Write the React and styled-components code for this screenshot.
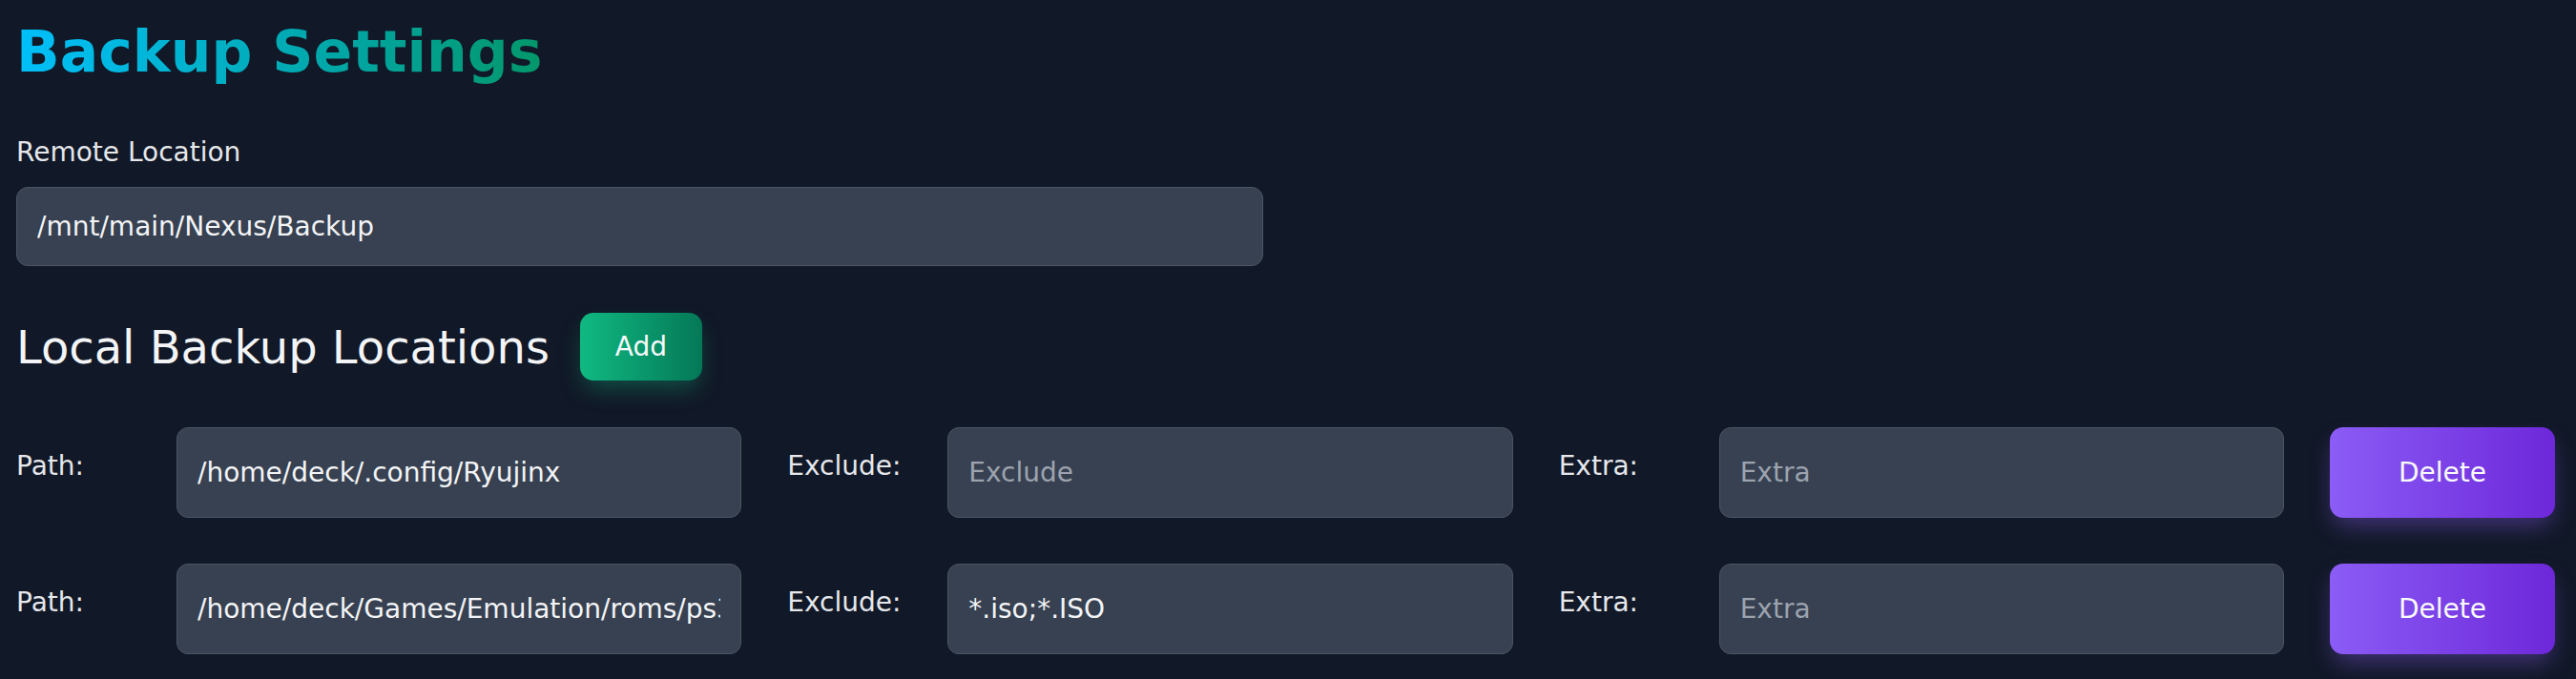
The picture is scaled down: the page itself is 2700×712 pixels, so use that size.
import React from 'react'
import styled, { createGlobalStyle } from 'styled-components'

const GlobalStyle = createGlobalStyle`
  html, body {
    margin: 0;
    padding: 0;
    background: #111827;
  }
  body {
    font-family: "DejaVu Sans", "Noto Sans", sans-serif;
    color: #e5e7eb;
  }
`

const locations = [
  { path: '/home/deck/.config/Ryujinx', exclude: '', extra: '' },
  { path: '/home/deck/Games/Emulation/roms/ps3', exclude: '*.iso;*.ISO', extra: '' },
]

function App() {
  return (
    <>
      <GlobalStyle />
      <Page>
        <Title>Backup Settings</Title>

        <FieldLabel>Remote Location</FieldLabel>
        <RemoteInput readOnly value="/mnt/main/Nexus/Backup" />

        <SectionHeader>
          <SectionTitle>Local Backup Locations</SectionTitle>
          <AddButton>Add</AddButton>
        </SectionHeader>

        <LocationList>
          {locations.map((loc, i) => (
            <LocationRow key={i}>
              <RowLabel>Path:</RowLabel>
              <RowInput readOnly value={loc.path} placeholder="Path" />
              <RowLabel>Exclude:</RowLabel>
              <RowInput readOnly value={loc.exclude} placeholder="Exclude" />
              <RowLabel>Extra:</RowLabel>
              <RowInput readOnly value={loc.extra} placeholder="Extra" />
              <DeleteButton>Delete</DeleteButton>
            </LocationRow>
          ))}
        </LocationList>
      </Page>
    </>
  )
}

const Page = styled.div`
  min-height: 712px;
  box-sizing: border-box;
  padding: 18px 22px 0 17px;
  background: #111827;
`

const Title = styled.h1`
  margin: 0 0 50px;
  width: fit-content;
  font-size: 60px;
  line-height: 72px;
  font-weight: 700;
  background: linear-gradient(90deg, #00c0fa 0%, #00abb6 50%, #03976a 100%);
  -webkit-background-clip: text;
  background-clip: text;
  color: transparent;
`

const FieldLabel = styled.div`
  font-size: 28px;
  line-height: 40px;
  color: #e5e7eb;
  margin-bottom: 16px;
`

const inputBase = `
  box-sizing: border-box;
  background: #374151;
  border: 1.5px solid #4b5563;
  border-radius: 12px;
  color: #f3f4f6;
  font-family: "DejaVu Sans", "Noto Sans", sans-serif;
  font-size: 28px;
  padding: 0 21px;
  outline: none;
  &::placeholder {
    color: #9ca3af;
  }
`

const RemoteInput = styled.input`
  ${inputBase}
  display: block;
  width: 1307px;
  height: 83px;
`

const SectionHeader = styled.div`
  display: flex;
  align-items: center;
  gap: 32px;
  margin-top: 49px;
`

const SectionTitle = styled.h2`
  margin: 0;
  font-size: 48px;
  line-height: 58px;
  font-weight: 400;
  color: #f3f4f6;
`

const Button = styled.button`
  border: none;
  border-radius: 14px;
  color: #f9fafb;
  font-family: "DejaVu Sans", "Noto Sans", sans-serif;
  font-size: 28px;
  cursor: pointer;
`

const AddButton = styled(Button)`
  width: 128px;
  height: 71px;
  background: linear-gradient(90deg, #10b981, #047857);
  box-shadow: 0 12px 24px -4px rgba(16, 185, 129, 0.35);
`

const LocationList = styled.div`
  display: flex;
  flex-direction: column;
  gap: 48px;
  margin-top: 49px;
`

const LocationRow = styled.div`
  display: flex;
  align-items: flex-start;
  gap: 48px;
`

const RowLabel = styled.div`
  flex: 0 0 120px;
  padding-top: 21px;
  font-size: 28px;
  line-height: 40px;
  color: #e5e7eb;
`

const RowInput = styled.input`
  ${inputBase}
  flex: 1 1 0;
  min-width: 0;
  height: 95px;
`

const DeleteButton = styled(Button)`
  flex: 0 0 236px;
  height: 95px;
  background: linear-gradient(90deg, #8b5cf6, #6d28d9);
  box-shadow: 0 12px 24px -4px rgba(139, 92, 246, 0.4);
`

export default App
